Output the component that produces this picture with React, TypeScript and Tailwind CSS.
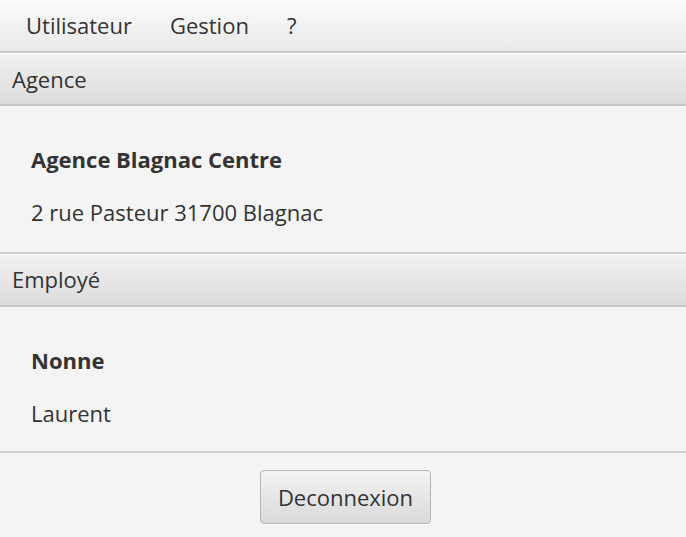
export default function App() {
  const font = { fontFamily: '"Open Sans", "Noto Sans", sans-serif' };
  return (
    <div className="w-[686px] h-[537px] bg-[#f4f4f4] text-[#333333] flex flex-col overflow-hidden text-[22px]" style={font}>
      {/* menu bar */}
      <div className="h-[53px] shrink-0 flex items-center gap-[38px] pl-[26px] pb-[1px] bg-gradient-to-b from-[#fbfbfb] to-[#e9e9e9] border-b-2 border-[#c9c9c9]">
        <span>Utilisateur</span>
        <span>Gestion</span>
        <span>?</span>
      </div>

      {/* Agence */}
      <div className="h-[53px] shrink-0 flex items-center pl-[12px] bg-gradient-to-b from-[#f1f1f1] to-[#dcdcdc] border-t border-white border-b-2 border-b-[#c6c6c6]">
        Agence
      </div>
      <div className="h-[148px] shrink-0 flex flex-col pl-[31px] pt-[39px] gap-[25px] border-b-2 border-[#cfcfcf]">
        <span className="font-bold leading-[28px]">Agence Blagnac Centre</span>
        <span className="leading-[28px]">2 rue Pasteur 31700 Blagnac</span>
      </div>

      {/* Employé */}
      <div className="h-[53px] shrink-0 flex items-center pl-[12px] pb-[1px] bg-gradient-to-b from-[#f1f1f1] to-[#dcdcdc] border-t border-white border-b-2 border-b-[#c6c6c6]">
        Employé
      </div>
      <div className="h-[146px] shrink-0 flex flex-col pl-[31px] pt-[39px] gap-[25px] border-b-2 border-[#d0d0d0]">
        <span className="font-bold leading-[28px]">Nonne</span>
        <span className="leading-[28px]">Laurent</span>
      </div>

      {/* bottom */}
      <div className="flex justify-center pt-[17px] pl-[5px]">
        <button className="w-[171px] h-[54px] rounded-[4px] border border-[#b5b5b5] bg-gradient-to-b from-[#f3f3f3] to-[#dadada] text-[22px] text-[#333333] shadow-[0_1px_0_#ffffff]">
          Deconnexion
        </button>
      </div>
    </div>
  );
}
